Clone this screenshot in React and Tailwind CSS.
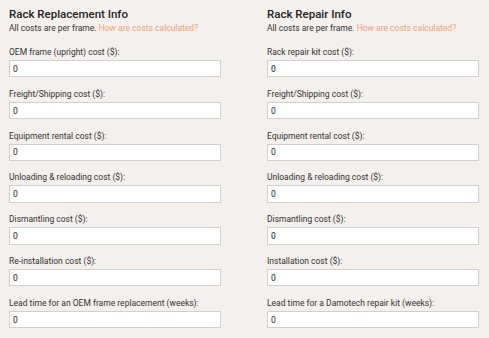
const replacementFields = [
  'OEM frame (upright) cost ($):',
  'Freight/Shipping cost ($):',
  'Equipment rental cost ($):',
  'Unloading & reloading cost ($):',
  'Dismantling cost ($):',
  'Re-installation cost ($):',
  'Lead time for an OEM frame replacement (weeks):',
]

const repairFields = [
  'Rack repair kit cost ($):',
  'Freight/Shipping cost ($):',
  'Equipment rental cost ($):',
  'Unloading & reloading cost ($):',
  'Dismantling cost ($):',
  'Installation cost ($):',
  'Lead time for a Damotech repair kit (weeks):',
]

function Section({ title, fields }) {
  return (
    <div className="w-[212px]">
      <h2 className="text-[11.5px] leading-[14px] font-medium text-[#222]">{title}</h2>
      <p className="mt-[1.6px] text-[8.5px] leading-[11px] text-[#333]">
        All costs are per frame. <a className="text-[#f2a273]">How are costs calculated?</a>
      </p>
      <div className="mt-[13.4px] flex flex-col gap-[11.3px]">
        {fields.map((label) => (
          <div key={label}>
            <label className="block mb-[2px] text-[8.5px] leading-[11px] text-[#333]">{label}</label>
            <input
              readOnly
              value="0"
              className="block w-full h-[17.5px] px-[3px] bg-white border border-[#d2d0ce] text-[8.5px] text-[#222] outline-none"
            />
          </div>
        ))}
      </div>
    </div>
  )
}

export default function App() {
  return (
    <div className="min-h-screen w-[489px] h-[338px] overflow-hidden bg-[#f4f0ed] pt-[7px] pl-[9px] font-['Roboto',sans-serif]">
      <div className="flex gap-[46px]">
        <Section title="Rack Replacement Info" fields={replacementFields} />
        <Section title="Rack Repair Info" fields={repairFields} />
      </div>
    </div>
  )
}
